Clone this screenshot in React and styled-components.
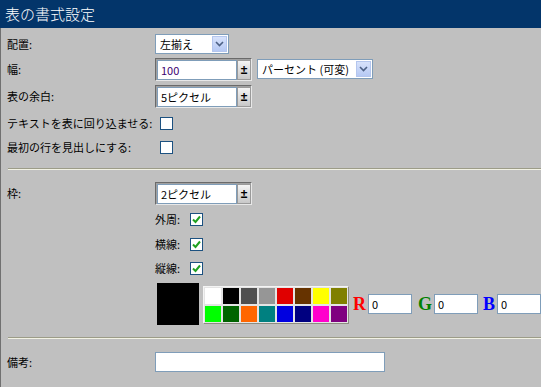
import React from 'react';
import styled, { createGlobalStyle } from 'styled-components';

const GlobalStyle = createGlobalStyle`
  html, body {
    margin: 0;
    padding: 0;
    background: #c0c0c0;
  }
  body {
    font-family: "Noto Sans CJK JP", "Liberation Sans", sans-serif;
    font-size: 11px;
    color: #000;
  }
`;

const Page = styled.div`
  width: 541px;
  height: 387px;
  overflow: hidden;
  background: #c0c0c0;
`;

const Header = styled.div`
  height: 28px;
  background: #03356a;
  color: #fff;
  font-size: 15px;
  font-weight: 300;
  line-height: 28px;
  padding-left: 5px;
`;

const Body = styled.div`
  border-left: 1px solid #707070;
  padding: 3px 0 0 6px;
  height: 356px;
`;

const Row = styled.div`
  display: grid;
  grid-template-columns: 148px 1fr;
  align-items: center;
  height: ${p => p.h}px;
`;

const Label = styled.span`
  white-space: nowrap;
`;

const Controls = styled.div`
  display: flex;
  align-items: center;
  gap: ${p => p.gap || 0}px;
`;

const SubLabel = styled.span`
  width: 35px;
  white-space: nowrap;
`;

const Select = styled.div`
  display: flex;
  align-items: center;
  width: ${p => p.w}px;
  height: 20px;
  box-sizing: border-box;
  background: #fff;
  border: 1px solid #7f9db9;
  padding-left: 4px;
  span { flex: 1; white-space: nowrap; }
`;

const Arrow = styled.div`
  width: 15px;
  height: 16px;
  margin-right: 1px;
  background: linear-gradient(#d7e2fb, #b6c9f4);
  border: 1px solid #b4c6ee;
  box-sizing: border-box;
  display: flex;
  align-items: center;
  justify-content: center;
`;

const Spin = styled.div`
  display: flex;
  border-top: 1px solid #6a6a6a;
  border-left: 1px solid #6a6a6a;
  border-right: 1px solid #e8e8e8;
  border-bottom: 1px solid #e8e8e8;
  box-shadow: inset 1px 1px 0 #a0a0a0;
  padding: 1px 0 0 1px;
`;

const TextBox = styled.div`
  width: ${p => p.w}px;
  height: 20px;
  box-sizing: border-box;
  background: #fff;
  border: 1px solid #7f9db9;
  padding-left: 3px;
  line-height: 18px;
  color: ${p => p.c || '#000'};
`;

const SpinButton = styled.div`
  width: 14px;
  height: 20px;
  box-sizing: border-box;
  background: linear-gradient(#f4f4f4, #c8c8c8);
  border: 1px solid #9a9a9a;
  display: flex;
  align-items: center;
  justify-content: center;
  font-weight: bold;
  font-size: 12px;
  font-family: "Liberation Sans", sans-serif;
`;

const Check = styled.div`
  width: 13px;
  height: 13px;
  box-sizing: border-box;
  background: #fff;
  border: 1px solid #1c5180;
  display: flex;
  align-items: center;
  justify-content: center;
  margin-left: ${p => p.ml || 0}px;
`;

const Separator = styled.div`
  margin: ${p => p.m};
  height: 1px;
  background: #9c9c88;
  border-bottom: 1px solid #f2f2e4;
`;

const ColorRow = styled.div`
  display: flex;
  align-items: center;
  margin: 3px 0 0 150px;
  height: 42px;
`;

const Swatch = styled.div`
  width: 42px;
  height: 42px;
  background: #000;
`;

const Palette = styled.div`
  margin-left: 4px;
  display: grid;
  grid-template-columns: repeat(8, 16px);
  grid-auto-rows: 16px;
  gap: 2px;
  padding: 1px;
  background: #e4e4e4;
  border-top: 1px solid #f4f4f4;
  border-left: 1px solid #f4f4f4;
  box-shadow: 1px 1px 0 #8c8c80;
`;

const Cell = styled.div`
  background: ${p => p.c};
`;

const Channel = styled.span`
  font-family: "Liberation Serif", serif;
  font-weight: bold;
  font-size: 18px;
  color: ${p => p.c};
  margin: 0 2px 0 ${p => p.ml}px;
`;

const Tick = () => (
  <svg width="9" height="9" viewBox="0 0 9 9">
    <path d="M1 4.5 L3.5 7 L8 1.5" fill="none" stroke="#21a121" strokeWidth="2" />
  </svg>
);

const Chevron = () => (
  <svg width="9" height="6" viewBox="0 0 9 6">
    <path d="M1 1 L4.5 4.5 L8 1" fill="none" stroke="#4d6185" strokeWidth="1.6" />
  </svg>
);

const colors = [
  '#ffffff', '#000000', '#505050', '#969696', '#e00000', '#663300', '#ffff00', '#808000',
  '#00ff00', '#006400', '#ff6600', '#008080', '#0000e0', '#000080', '#ff00cc', '#800080',
];

const borderLines = [
  { label: '外周:', h: 26 },
  { label: '横線:', h: 24 },
  { label: '縦線:', h: 24 },
];

export default function App() {
  return (
    <Page>
      <GlobalStyle />
      <Header>表の書式設定</Header>
      <Body>
        <Row h={25}>
          <Label>配置:</Label>
          <Controls>
            <Select w={74}><span>左揃え</span><Arrow><Chevron /></Arrow></Select>
          </Controls>
        </Row>
        <Row h={26}>
          <Label>幅:</Label>
          <Controls gap={5}>
            <Spin>
              <TextBox w={80} c="#400070">100</TextBox>
              <SpinButton>±</SpinButton>
            </Spin>
            <Select w={116}><span>パーセント (可変)</span><Arrow><Chevron /></Arrow></Select>
          </Controls>
        </Row>
        <Row h={28}>
          <Label>表の余白:</Label>
          <Controls>
            <Spin>
              <TextBox w={80}>5ピクセル</TextBox>
              <SpinButton>±</SpinButton>
            </Spin>
          </Controls>
        </Row>
        <Row h={26}>
          <Label>テキストを表に回り込ませる:</Label>
          <Controls><Check ml={5} /></Controls>
        </Row>
        <Row h={22}>
          <Label>最初の行を見出しにする:</Label>
          <Controls><Check ml={5} /></Controls>
        </Row>
        <Separator m="10px 0 10px 1px" />
        <Row h={26}>
          <Label>枠:</Label>
          <Controls>
            <Spin>
              <TextBox w={80}>2ピクセル</TextBox>
              <SpinButton>±</SpinButton>
            </Spin>
          </Controls>
        </Row>
        {borderLines.map(b => (
          <Row h={b.h} key={b.label}>
            <span />
            <Controls><SubLabel>{b.label}</SubLabel><Check><Tick /></Check></Controls>
          </Row>
        ))}
        <ColorRow>
          <Swatch />
          <Palette>
            {colors.map(c => <Cell key={c} c={c} />)}
          </Palette>
          <Channel c="#ff0000" ml={5}>R</Channel>
          <TextBox w={44}>0</TextBox>
          <Channel c="#008000" ml={6}>G</Channel>
          <TextBox w={44}>0</TextBox>
          <Channel c="#0000ff" ml={5}>B</Channel>
          <TextBox w={44}>0</TextBox>
        </ColorRow>
        <Separator m="12px 0 11px 1px" />
        <Row h={24}>
          <Label>備考:</Label>
          <Controls><TextBox w={230} /></Controls>
        </Row>
      </Body>
    </Page>
  );
}
